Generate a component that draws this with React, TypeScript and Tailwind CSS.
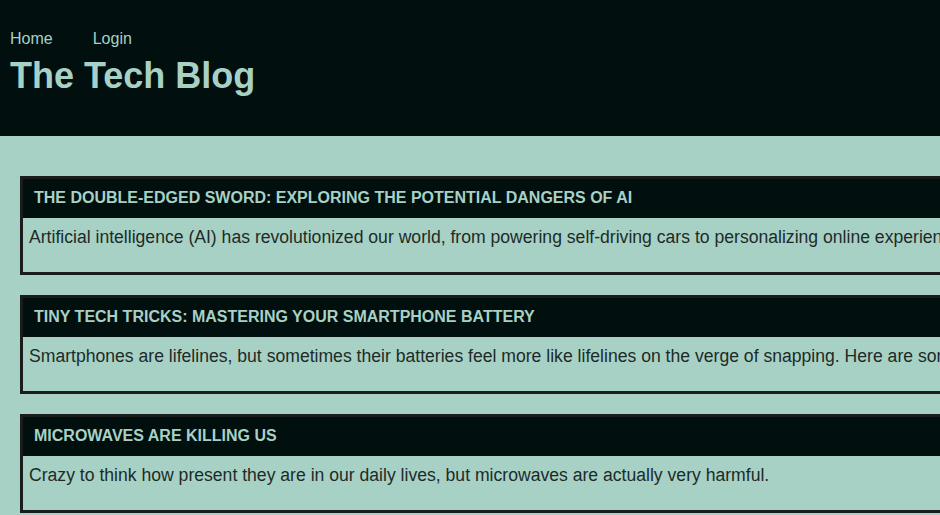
import React from "react";

const posts = [
  {
    title: "The Double-Edged Sword: Exploring the Potential Dangers of AI",
    body: "Artificial intelligence (AI) has revolutionized our world, from powering self-driving cars to personalizing online experiences, but its rapid growth raises serious questions.",
  },
  {
    title: "Tiny Tech Tricks: Mastering Your Smartphone Battery",
    body: "Smartphones are lifelines, but sometimes their batteries feel more like lifelines on the verge of snapping. Here are some simple tricks to keep yours going longer.",
  },
  {
    title: "Microwaves are killing us",
    body: "Crazy to think how present they are in our daily lives, but microwaves are actually very harmful.",
  },
];

const App = () => {
  return (
    <div className="w-screen h-screen overflow-hidden bg-[#a8d1c5] font-['Liberation_Sans',Arial,sans-serif]">
      <header className="bg-[#010f0e] h-[136px] pt-[27px] pl-[10px]">
        <nav className="flex gap-10 text-[16px] text-[#a8d1c5]">
          <a className="cursor-pointer">Home</a>
          <a className="cursor-pointer">Login</a>
        </nav>
        <h1 className="mt-[4px] text-[36px] font-bold text-[#a8d1c5] leading-[41px]">
          The Tech Blog
        </h1>
      </header>
      <main className="pt-10 pl-5 flex flex-col gap-5">
        {posts.map((post) => {
          return (
            <article
              key={post.title}
              className="w-[1400px] border-[3px] border-[#1b1d1c] whitespace-nowrap"
            >
              <h2 className="bg-[#010f0e] text-[#a8d1c5] uppercase font-bold text-[16px] pl-[11px] pt-[10px] pb-[11px] leading-[18px]">
                {post.title}
              </h2>
              <p className="text-[17.6px] text-[#1d2b28] pl-[6px] pt-[9px] pb-[24px] leading-[21px]">
                {post.body}
              </p>
            </article>
          );
        })}
      </main>
    </div>
  );
};

export default App;
